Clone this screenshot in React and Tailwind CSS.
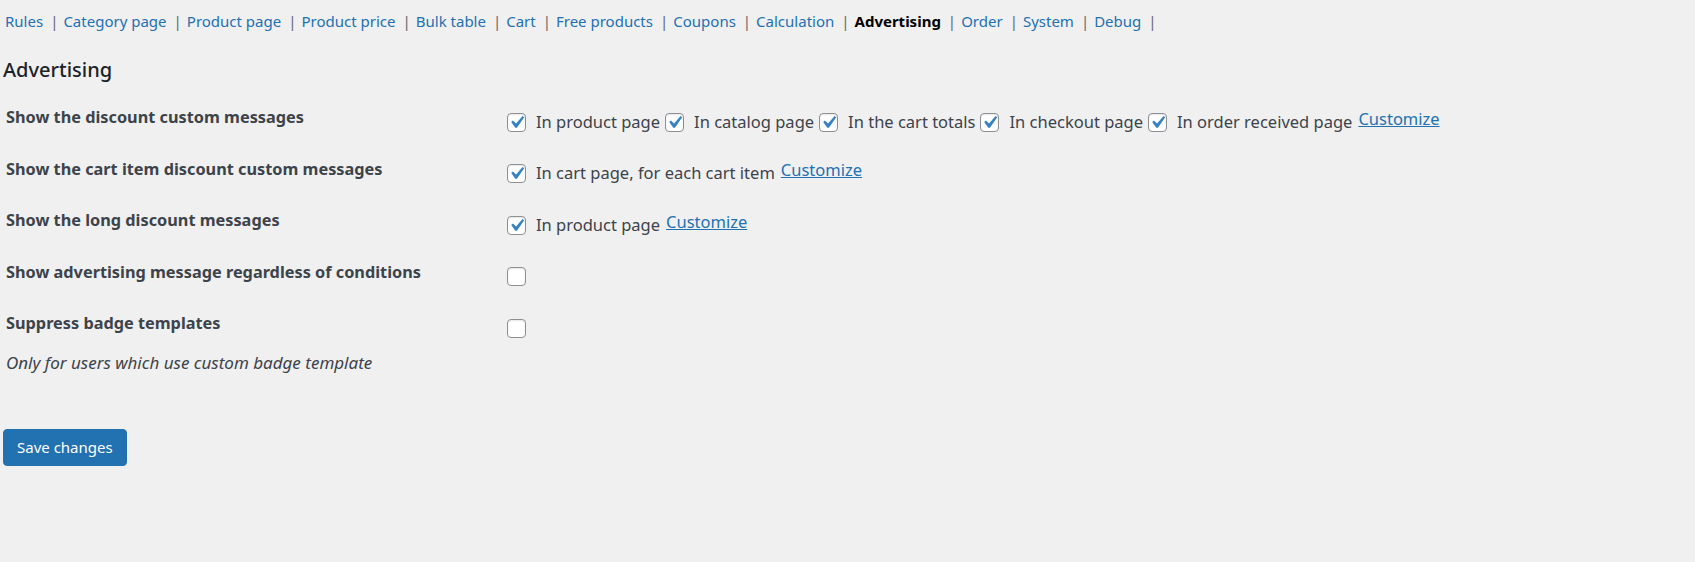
import React from "react";

const tabs = [
  "Rules",
  "Category page",
  "Product page",
  "Product price",
  "Bulk table",
  "Cart",
  "Free products",
  "Coupons",
  "Calculation",
  "Advertising",
  "Order",
  "System",
  "Debug",
];

const rows = [
  {
    label: "Show the discount custom messages",
    options: [
      "In product page",
      "In catalog page",
      "In the cart totals",
      "In checkout page",
      "In order received page",
    ],
    checked: true,
    customize: true,
  },
  {
    label: "Show the cart item discount custom messages",
    options: ["In cart page, for each cart item"],
    checked: true,
    customize: true,
  },
  {
    label: "Show the long discount messages",
    options: ["In product page"],
    checked: true,
    customize: true,
  },
  {
    label: "Show advertising message regardless of conditions",
    options: [""],
    checked: false,
  },
  {
    label: "Suppress badge templates",
    options: [""],
    checked: false,
  },
];

function Checkbox({ checked }) {
  return (
    <span className="relative inline-block w-[19px] h-[19px] shrink-0 rounded-[4px] border border-[#8c8f94] bg-white shadow-[inset_0_1px_2px_rgba(0,0,0,0.1)]">
      {checked && (
        <svg
          viewBox="0 0 20 20"
          className="absolute -left-[4px] -top-[4px] w-[25px] h-[25px]"
        >
          <path
            d="M14.83 4.89l1.34.94-5.81 8.38H9.02L5.78 9.67l1.34-1.25 2.57 2.4z"
            fill="#3582c4"
          />
        </svg>
      )}
    </span>
  );
}

const App = () => {
  return (
    <div className="min-h-[562px] bg-[#f0f0f1] font-['Noto_Sans',sans-serif] text-[15px] text-[#3c434a]">
      {/* Tabs */}
      <div className="flex items-center pl-[5px] pt-[10px] leading-[22px]">
        {tabs.map((tab) => (
          <span key={tab} className="flex items-center">
            {tab === "Advertising" ? (
              <span className="font-bold text-black">{tab}</span>
            ) : (
              <a className="text-[#2271b1]">{tab}</a>
            )}
            <span className="ml-[7px] mr-[5px] text-[#646970]">|</span>
          </span>
        ))}
      </div>

      {/* Heading */}
      <h2 className="mt-[25px] pl-[3px] text-[20px] leading-[26px] text-[#1d2327] font-medium">
        Advertising
      </h2>

      {/* Settings */}
      <div className="mt-[23px] text-[16.3px]">
        {rows.map((row) => (
          <div
            key={row.label}
            className="grid grid-cols-[507px_1fr] h-[51.5px]"
          >
            <div className="pl-[6px] font-bold leading-[22px]">
              {row.label}
            </div>
            <div className="mt-[5px] flex items-center h-[22px] text-[16.5px]">
              {row.options.map((opt, i) => (
                <span key={i} className="flex items-center">
                  {i > 0 && <span className="w-[5px]" />}
                  <Checkbox checked={row.checked} />
                  {opt && <span className="ml-[10px]">{opt}</span>}
                </span>
              ))}
              {row.customize && (
                <a className="ml-[6px] -translate-y-[3px] text-[#2271b1] underline">
                  Customize
                </a>
              )}
            </div>
          </div>
        ))}
        <p className="-mt-[12px] pl-[6px] italic text-[17px] leading-[22px]">
          Only for users which use custom badge template
        </p>
      </div>

      {/* Save */}
      <div className="mt-[55px] pl-[3px]">
        <button className="h-[37px] px-[13px] rounded-[4px] bg-[#2271b1] border border-[#2271b1] text-white text-[15px] leading-[22px]">
          Save changes
        </button>
      </div>
    </div>
  );
};

export default App;
